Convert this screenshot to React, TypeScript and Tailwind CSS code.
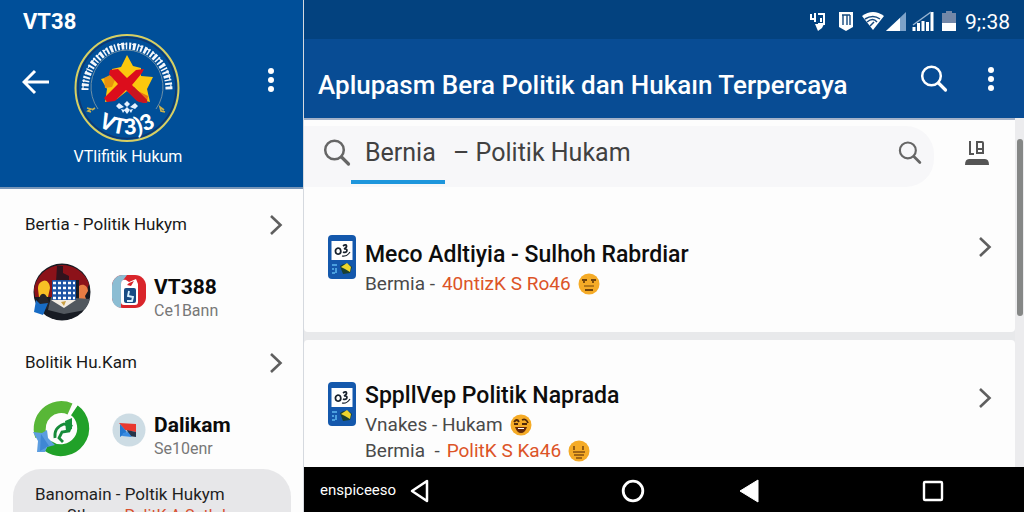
import type { ReactNode } from 'react';
import { clsx } from 'clsx';

interface Article {
  title: string;
  lines: { lead: string; topic?: string; mood: 'flat' | 'laugh' | 'grin' }[];
}

const articles: Article[] = [
  {
    title: 'Meco Adltiyia - Sulhoh Rabrdiar',
    lines: [{ lead: 'Bermia -', topic: '40ntizK S Ro46', mood: 'flat' }],
  },
  {
    title: 'SppllVep Politik Naprada',
    lines: [
      { lead: 'Vnakes - Hukam', mood: 'laugh' },
      { lead: 'Bermia  -', topic: 'PolitK S Ka46', mood: 'grin' },
    ],
  },
];

function Dots() {
  return (
    <svg width="8" height="28" viewBox="0 0 8 28" fill="white" aria-hidden="true">
      <circle cx="4" cy="5" r="3" />
      <circle cx="4" cy="14" r="3" />
      <circle cx="4" cy="23" r="3" />
    </svg>
  );
}

function Chevron() {
  return (
    <svg width="14" height="24" viewBox="0 0 14 24" fill="none" stroke="#5f5f5f" strokeWidth="2.6" aria-hidden="true">
      <path d="M2 3 11.500 12 2 21" />
    </svg>
  );
}

function SearchIcon({ className }: { className: string }) {
  return (
    <svg className={className} viewBox="0 0 28 28" fill="none" stroke="currentColor" strokeLinecap="round" aria-hidden="true">
      <circle cx="11.500" cy="11" r="9.300" strokeWidth="2.500" />
      <path d="m18.500 18 7 7" strokeWidth="3.200" />
    </svg>
  );
}

function Emblem() {
  return (
    <svg className="h-[108px] w-[106px]" viewBox="0 0 106 108" fill="none" aria-hidden="true">
      <ellipse cx="53" cy="54" rx="51.500" ry="53" stroke="#d8cf62" strokeWidth="2" />
      <ellipse cx="53" cy="54" rx="49" ry="50.500" stroke="#10376f" strokeWidth="1.500" />
      <path d="M11 56a42 44 0 0 1 84 0" stroke="#f4f7fb" strokeWidth="7" strokeDasharray="2 1.800 2.800 1.600 1.500 1.900" />
      <path d="M9 55a44 45 0 0 1 88 0" stroke="#f4f7fb" strokeWidth="1.200" strokeDasharray="4 3 3 5" />
      <path d="M24 75a36 37 0 1 1 58 0" stroke="#6d8fa6" strokeWidth="1" />
      <path d="m53 21 6 11 8 2v8l12 1-6 12 3 13-12-3-11-8-10 8-12 3 2-13-6-10 11-3v-7l9-2z" fill="#fbc80e" />
      <path d="m30 44 6-3 5 5-3 7-7 1z" fill="#e8920d" />
      <path d="m62 56 12 6-1 7-9-2z" fill="#e87413" />
      <path d="m36 36 8-1 9 9 9-8 8-1-2 4-10 12 15 15-3 3-7-2-11-11-11 11-8 1-3-4 14-14-9-10z" fill="#dc0d1c" />
      <path d="m60 53 13 13v3l-8-1-9-10z" fill="#c71520" />
      <g fill="#e3f1ff">
        <path d="m53 67 3 3-3 3-3-3zM53 73l3 3-3 4-3-4zM45 69l5 4-5 2-3-3zM61 69l-5 4 5 2 3-3zM47 75l4 1-2 3zM59 75l-4 1 2 3z" />
      </g>
      <path d="m13 74 4 1-3 2 3 1M18 76l3-2M90 76l-4-3 1 4 4 1" stroke="#cbb24d" strokeWidth="1.600" />
      <path id="emblem-arc" d="M21 90Q53 111 85 90" />
      <text fill="white" fontFamily="Roboto, sans-serif" fontWeight="700" fontSize="22">
        <textPath href="#emblem-arc" startOffset="50%" textAnchor="middle">VT3)3</textPath>
      </text>
    </svg>
  );
}

function CrowdAvatar() {
  return (
    <svg className="size-[60px]" viewBox="0 0 60 60" aria-hidden="true">
      <circle cx="31" cy="30" r="28.500" fill="#171b23" />
      <path d="M3 27A28.500 28.500 0 0 1 58 22l-3 9-7 2V18H22v17H4z" fill="#8c1219" />
      <path d="M26 4h6v7l6 3v6H25z" fill="#31131d" />
      <path d="M7 27c0-5 2-7 5-8 3-2 7 2 7 7l-2 9H8z" fill="#f8bf25" />
      <path d="M48 24c4-3 9 0 9 5l-3 5 2 6h-8z" fill="#e77c43" />
      <path d="M9 34c3-5 7-1 8 4l4 7-9 3-6-6z" fill="#25242a" />
      <path d="M20 35 44 36l15 1c-2 8-6 12-10 12l-16 3-16-4z" fill="#52585f" />
      <rect x="21" y="18" width="24" height="20" rx="1" fill="#1d54a4" />
      <path d="M22 21h22M22 26h22M22 31h22M22 36h22" stroke="#fff" strokeWidth="2.300" strokeDasharray="3 2" />
      <path d="M20 38h25l-12 8z" fill="#f3ece2" />
      <path d="m30 40 5-1-2 5z" fill="#c99f42" />
      <path d="m5 38 4 4 8-1-5 12-9-3z" fill="#176bc4" />
    </svg>
  );
}

function CardBadge() {
  return (
    <svg className="h-9 w-[34px]" viewBox="0 0 34 36" aria-hidden="true">
      <rect y="1" width="34" height="33" rx="11" fill="#d9252b" />
      <path d="M11 1h4L9 9v25A10 10 0 0 1 0 24V12A11 11 0 0 1 11 1z" fill="#8cbdd3" />
      <path d="M9 10c0-3 2-5 5-4l3 2 7-3 2 5v18q0 3-3 3H12q-3 0-3-3z" fill="#fff" />
      <path d="m17 9 5-2-3 5-4-1z" fill="#d9252b" />
      <rect x="12" y="14" width="12" height="15" rx="2" fill="#174b83" />
      <path d="m17 17-1 5 5 1-1 4h-5" fill="none" stroke="#d5f1ff" strokeWidth="1.800" />
    </svg>
  );
}

function GreenAvatar() {
  return (
    <svg className="size-[60px]" viewBox="0 0 60 60" fill="none" aria-hidden="true">
      <path d="M10 36A21.500 21.500 0 0 1 39 9" stroke="#58b737" strokeWidth="12" />
      <path d="M43 10A21.500 21.500 0 1 1 17 46" stroke="#21a129" strokeWidth="12" />
      <path d="m38 16 8-12" stroke="#fff" strokeWidth="2.500" />
      <path d="M24 38c-1-8 3-12 9-14l7 2-2 5-7 1-3 6 4 4" stroke="#178b3a" strokeWidth="2.800" />
      <path d="m34 21 7-3v11l-6 2z" fill="#15913b" />
      <path d="m2 32 9 1 5-3 1 8 7 7-8 2-2 5H6l1-11z" fill="#5c9de0" />
      <path d="m10 34 8 12-9 5z" fill="#3f87d4" />
    </svg>
  );
}

function FlagBadge() {
  return (
    <svg className="h-9 w-[34px]" viewBox="0 0 34 36" aria-hidden="true">
      <circle cx="17" cy="18" r="16.500" fill="#cddce4" />
      <path d="m7 11 17 1v8l-11-2z" fill="#e9382f" />
      <path d="m8 12 7 8-7 5z" fill="#2377d0" />
      <path d="m15 18 9 2v5l-7-1z" fill="#263449" />
      <path d="m11 21 5-1 4 5-10-1z" fill="#398ce2" />
    </svg>
  );
}

function ArticleIcon() {
  return (
    <svg className="h-11 w-7 shrink-0" viewBox="0 0 28 44" fill="none" aria-hidden="true">
      <rect width="28" height="44" rx="4" fill="#1458ac" />
      <rect x="3.500" y="6" width="21" height="19" fill="#fff" />
      <path d="M10 13c-4 1-3 7 1 6 3-1 2-6-1-6zM15 11c4-3 5 1 1 3 5-1 3 5-1 3" stroke="#18212c" strokeWidth="1.700" />
      <path d="M14 21c4 1 6-1 8-4" stroke="#18212c" strokeWidth="1.200" />
      <path d="M4 30h5M4 34h2M8 33v5M4 38h3" stroke="#5cb8ef" strokeWidth="1.500" />
      <path d="M12 31q7-5 12 1l-2 6-7 1z" fill="#1b4030" />
      <path d="m13 32 6-4 4 4-1 5-5-3z" fill="#edd52d" />
    </svg>
  );
}

function Emoji({ mood }: { mood: 'flat' | 'laugh' | 'grin' }) {
  return (
    <svg className="size-[22px]" viewBox="0 0 22 22" fill="none" aria-hidden="true">
      <circle cx="11" cy="11" r="10.500" fill="#f5ab27" />
      {mood === 'flat' && (
        <g stroke="#70440d" strokeWidth="1.800">
          <path d="M4 7h5M13 7h5M6 8v2M15 8v2M7 17h8" />
          <path d="M6 13h10" strokeWidth="1" />
        </g>
      )}
      {mood === 'laugh' && (
        <>
          <path d="M4 8q3-4 5 0M12 6q4-2 6 3M4 10h4M12 10h5" stroke="#50290a" strokeWidth="1.800" />
          <path d="M5 13h12q-2 6-6 6t-6-6z" fill="#63290b" />
          <path d="M8 14h6v1H8z" fill="#fff" />
        </>
      )}
      {mood === 'grin' && (
        <g stroke="#855012" strokeWidth="1.700">
          <path d="M6 6v4M15 6v4M5 12h12M6 15h10M8 18h6" />
        </g>
      )}
    </svg>
  );
}

function StatusBar() {
  return (
    <div className="flex h-[39px] shrink-0 items-center justify-end bg-[#03427f] pt-1 pr-[14px] text-white">
      <svg className="h-6 w-[148px]" viewBox="0 0 148 24" fill="none" aria-hidden="true">
        <path d="M2 4v5h4M6 3v9M9 4h6v10H9M12 8v4" stroke="#fff" strokeWidth="2" />
        <path d="M6 14h9l-2 4-4 3z" fill="#fff" />
        <path d="M30 2h14v15l-7 4-7-4z" fill="#fff" />
        <path d="M33 5h8M34 5v10M38 5v10M41 5v10" stroke="#15497e" strokeWidth="1.400" />
        <path d="M53 6q11-8 22 0L64 20z" fill="#fff" />
        <path d="M56 9q8-5 15 0M58 12q6-5 10 0M65 12l-4 4" stroke="#15497e" strokeWidth="1.500" />
        <path d="M77 21 97 2v19z" fill="#7da2c9" />
        <path d="M77 21 91 8v13z" fill="#fff" />
        <path d="M105 21v-4M109.500 21v-8M114 21V11M118.500 21v-9M123 21V2" stroke="#fff" strokeWidth="3" />
        <path d="m104 15 18-13" stroke="#9ab5d1" strokeWidth="1.500" />
        <path d="M133 3h4V1h6v2h4v18h-14z" fill="#7488a8" />
        <path d="M133 13h14v8h-14z" fill="#fff" />
      </svg>
      <time className="pl-[8px] text-[21px] leading-6">9;:38</time>
    </div>
  );
}

function SidebarSection({ title, avatar, badge, name, note }: { title: string; avatar: ReactNode; badge: ReactNode; name: string; note: string }) {
  return (
    <section>
      <h2>
        <a href="#section" className="flex h-12 items-center justify-between pr-5 pl-[25px] text-[17px] text-[#191919]">
          {title}
          <Chevron />
        </a>
      </h2>
      <a href="#profile" className="mt-3 mb-4 flex h-[62px] items-center pl-[31px]">
        {avatar}
        <span className="ml-[21px]">{badge}</span>
        <span className="ml-2 flex flex-col pt-[14px]">
          <strong className="text-[21px] leading-6 font-bold text-[#0b0b0b]">{name}</strong>
          <span className="text-base leading-6 text-[#777777]">{note}</span>
        </span>
      </a>
    </section>
  );
}

function Sidebar() {
  return (
    <aside className="flex w-[304px] shrink-0 flex-col overflow-hidden border-r border-[#d5d9df] bg-[#fdfdfd]">
      <header className="h-[189px] shrink-0 border-b-2 border-[#7896b8] bg-[#004f99] pt-[10px] text-white">
        <p className="pl-[23px] text-[22px] leading-6 font-bold">VT38</p>
        <div className="flex items-start pr-7 pl-[22px]">
          <button type="button" aria-label="Back" className="flex h-24 w-[52px] items-center">
            <svg width="28" height="26" viewBox="0 0 28 26" fill="none" stroke="white" strokeWidth="3" aria-hidden="true">
              <path d="M27 13H3M13 2 2 13l11 11" />
            </svg>
          </button>
          <Emblem />
          <button type="button" aria-label="More options" className="ml-auto flex h-[92px] items-center">
            <Dots />
          </button>
        </div>
        <p className="w-[256px] pt-[3px] text-center text-base leading-6">VTlifitik Hukum</p>
      </header>
      <div className="shrink-0 pt-3">
        <SidebarSection title="Bertia - Politik Hukym" avatar={<CrowdAvatar />} badge={<CardBadge />} name="VT388" note="Ce1Bann" />
        <SidebarSection title="Bolitik Hu.Kam" avatar={<GreenAvatar />} badge={<FlagBadge />} name="Dalikam" note="Se10enr" />
      </div>
      <a href="#banomain" className="-mt-2 mr-3 ml-[13px] block h-20 shrink-0 rounded-[28px] bg-[#e7e7e9] px-[22px] pt-[13px] text-[#1f1f1f]">
        <span className="block text-[17px] leading-6">Banomain - Poltik Hukym</span>
        <span className="block pl-8 text-base leading-5">
          Sthu - <span className="text-[#d9502f]">a PolitK A Sotkdu</span>
        </span>
      </a>
    </aside>
  );
}

function ArticleRow({ article }: { article: Article }) {
  const multiline = article.lines.length > 1;

  return (
    <a href="#article" className="flex items-start pr-[23px] pl-6">
      <ArticleIcon />
      <div className={clsx('ml-[9px] flex-1', !multiline && 'pt-[6px]')}>
        <h2 className="mb-[2px] text-[23px] leading-7 font-medium text-[#0d0d0d]">{article.title}</h2>
        {article.lines.map((line) => (
          <p key={line.lead} className="flex h-[26px] items-center gap-[7px] text-[19px] whitespace-pre text-[#4a4a4a]">
            {line.lead}
            {line.topic && <span className="text-[#dc5427]">{line.topic}</span>}
            <Emoji mood={line.mood} />
          </p>
        ))}
      </div>
      <span className={clsx(multiline && 'pt-1')}>
        <Chevron />
      </span>
    </a>
  );
}

function NavBar() {
  return (
    <nav className="flex h-[45px] shrink-0 items-center bg-black pt-[2px] pr-20 pl-4 text-white">
      <span className="w-[90px] text-[15px]">enspiceeso</span>
      <button type="button" aria-label="Back">
        <svg width="20" height="24" viewBox="0 0 20 24" fill="none" stroke="white" strokeWidth="2.500" strokeLinejoin="round" aria-hidden="true">
          <path d="M17 2v20L2 12z" />
        </svg>
      </button>
      <button type="button" aria-label="Home" className="ml-[191px]">
        <svg width="24" height="24" viewBox="0 0 24 24" fill="none" stroke="white" strokeWidth="2.800" aria-hidden="true">
          <circle cx="12" cy="12" r="9.800" />
        </svg>
      </button>
      <button type="button" aria-label="Previous" className="ml-[94px]">
        <svg width="20" height="24" viewBox="0 0 20 24" fill="white" stroke="white" strokeLinejoin="round" aria-hidden="true">
          <path d="M19 1v22L1 12z" />
        </svg>
      </button>
      <button type="button" aria-label="Recent apps" className="ml-auto">
        <svg width="22" height="22" viewBox="0 0 22 22" fill="none" stroke="white" strokeWidth="2.400" aria-hidden="true">
          <rect x="2" y="2" width="18" height="18" rx="1" />
        </svg>
      </button>
    </nav>
  );
}

export default function App() {
  return (
    <div className="flex h-screen overflow-hidden bg-[#e8e9eb] font-[Roboto,sans-serif]">
      <Sidebar />
      <main className="flex min-w-0 flex-1 flex-col">
        <StatusBar />
        <header className="flex h-[79px] shrink-0 items-center bg-[#084c94] pr-[29px] pl-[14px] text-white">
          <h1 className="flex-1 pt-3 text-[26px] leading-8 font-medium whitespace-nowrap">Aplupasm Bera Politik dan Hukaın Terpercaya</h1>
          <button type="button" aria-label="Search">
            <SearchIcon className="size-7" />
          </button>
          <button type="button" aria-label="More options" className="ml-[39px]">
            <Dots />
          </button>
        </header>

        <div className="flex min-h-0 flex-1">
          <div className="flex min-w-0 flex-1 flex-col gap-2 overflow-hidden">
            <div className="h-[214px] shrink-0 rounded-b border-t-2 border-[#a3b1c8] bg-[#fdfdfd]">
              <div className="flex items-center pt-[6px] pr-[25px]">
                <form className="flex h-[61px] flex-1 items-center rounded-r-[28px] bg-[#f7f7f9] pr-3 pl-[19px] text-[25px] text-[#414141]">
                  <SearchIcon className="mb-2 size-7 text-[#666666]" />
                  <label htmlFor="query" className="flex h-[61px] w-[94px] flex-col justify-between">
                    <span className="pt-[9px] pl-[14px] leading-9">Bernia</span>
                    <span className="mb-[3px] h-1 bg-[#1e96dc]" />
                  </label>
                  <input id="query" type="text" defaultValue="– Politik Hukam" className="mb-[7px] ml-2 min-w-0 flex-1 bg-transparent leading-9 outline-none" />
                  <button type="submit" aria-label="Search" className="mb-2">
                    <SearchIcon className="size-6 text-[#666666]" />
                  </button>
                </form>
                <button type="button" aria-label="Library" className="ml-[30px] pb-2">
                  <svg width="26" height="28" viewBox="0 0 26 28" fill="none" stroke="#555555" aria-hidden="true">
                    <path d="M6 2v13h4M13 15V3h5q1 0 1 1v11M12 14h8M13 10h6" strokeWidth="2" />
                    <path d="M1 26q0-6 4-6h16q4 0 4 6z" fill="#555555" stroke="none" />
                  </svg>
                </button>
              </div>
              <div className="pt-12">
                <ArticleRow article={articles[0]} />
              </div>
            </div>
            <div className="flex-1 rounded-t bg-[#fdfdfd] pt-[42px]">
              <ArticleRow article={articles[1]} />
            </div>
          </div>
          <div className="w-[9px] shrink-0 bg-[#ececee] pt-[21px] pl-[2px]">
            <div className="h-[177px] w-[6px] rounded-full bg-[#858786]" />
          </div>
        </div>

        <NavBar />
      </main>
    </div>
  );
}
